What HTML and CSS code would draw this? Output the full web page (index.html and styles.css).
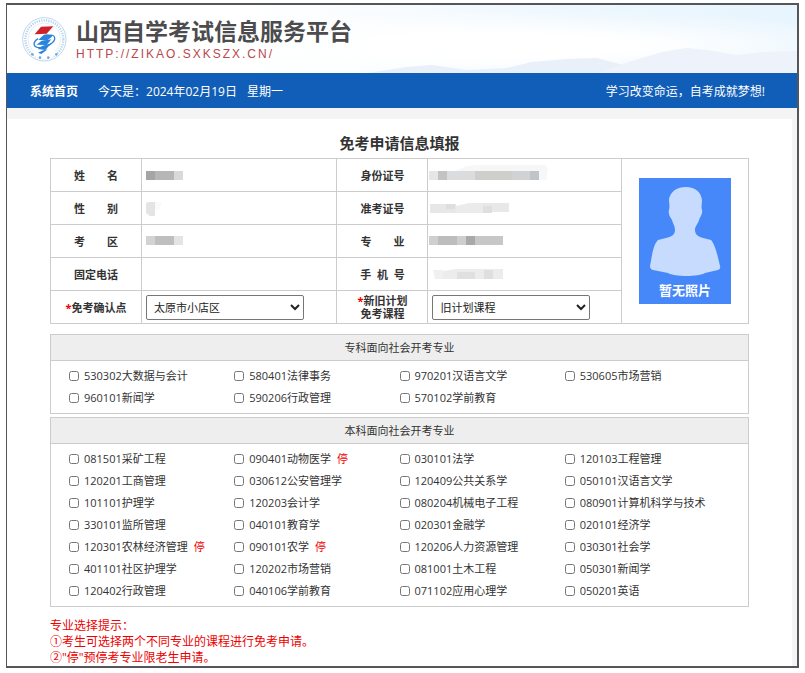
FILE: index.html
```html
<!DOCTYPE html>
<html lang="zh-CN">

<head>
    <meta charset="UTF-8">
    <meta name="viewport" content="width=device-width, initial-scale=1.0">
    <title>免考申请信息填报</title>
    <link rel="stylesheet" href="styles.css">
</head>

<body>
    <div class="page">
        <header class="header">
            <svg class="sky" viewBox="0 0 790 68" preserveAspectRatio="none" aria-hidden="true">
                <path d="M360 68 L400 62 L425 60 L460 65 L500 63 L525 57 L560 54 L590 53 L620 61 L640 68Z" fill="#e9f0fa" />
                <path d="M590 68 L625 56 L655 47 L680 43 L700 45 L730 50 L755 47 L790 46 L790 68Z" fill="#edf2fb" />
            </svg>
            <svg class="logo" viewBox="0 0 135 135" aria-hidden="true">
                <circle cx="67" cy="67" r="65" fill="#fff" stroke="#b9d7ef" stroke-width="3" />
                <circle cx="67" cy="67" r="57" fill="none" stroke="#b3d1ec" stroke-width="7" stroke-dasharray="3 3" pathLength="300" />
                <circle cx="67" cy="67" r="49" fill="#fff" stroke="#d5e7f6" stroke-width="2" />
                <path d="M28 108 L43 98 L91 98 L106 108 L84 127 L50 127Z" fill="#fff" />
                <path d="M57 29 L94 28 L74 50 L38 52Z" fill="#cf2129" />
                <path d="M49 68 L66 53 Q86 49 90 59 L74 71Z" fill="#2b83dc" />
                <path d="M44 83 L58 72 L88 67 L74 84Z" fill="#2b83dc" />
                <path d="M47 96 L62 86 L88 79 L70 99Z" fill="#2b83dc" />
                <path d="M48 107 L64 100 L77 97 L58 111Z" fill="#2b83dc" />
                <path d="M48 65 C32 76 32 90 50 92 C72 94 101 76 98 62 C97 55 90 54 84 55" fill="none" stroke="#2b83dc" stroke-width="4" />
                <g fill="#74a9dd">
                    <circle cx="31" cy="112" r="4" />
                    <circle cx="54" cy="122" r="4" />
                    <circle cx="79" cy="122" r="4" />
                    <circle cx="103" cy="112" r="4" />
                </g>
            </svg>
            <div class="brand">
                <div class="brand-name">山西自学考试信息服务平台</div>
                <div class="brand-url">HTTP://ZIKAO.SXKSZX.CN/</div>
            </div>
        </header>

        <nav class="nav">
            <a class="home" href="#">系统首页</a>
            <span class="date">今天是：2024年02月19日</span>
            <span class="week">星期一</span>
            <span class="slogan">学习改变命运，自考成就梦想!</span>
        </nav>

        <form class="content" action="#" method="post">
            <h1>免考申请信息填报</h1>

            <table class="info">
                <colgroup>
                    <col class="col-label">
                    <col class="col-value">
                    <col class="col-label">
                    <col>
                    <col class="col-photo">
                </colgroup>
                <tr>
                    <th>姓　　名</th>
                    <td>
                        <svg class="mask" width="120" height="20">
                            <path d="M0 6h9v9h-9z" fill="#a6a5a4" />
                            <path d="M9 6h19v9h-19z" fill="#b6b6b6" />
                            <path d="M28 6h9v9h-9z" fill="#d9d9d9" />
                        </svg>
                    </td>
                    <th>身份证号</th>
                    <td>
                        <svg class="mask mask-wide" width="120" height="20">
                            <path d="M26 6 L38 1 L70 -2 L116 -2 L119 5 L117 15 L109 15 L109 6Z" fill="#f7f7f7" />
                            <path d="M0 6h9v9h-9z" fill="#e6e6e6" />
                            <path d="M9 6h9v9h-9z" fill="#c3c3c3" />
                            <path d="M18 6h28v9h-28z" fill="#dbdcdd" />
                            <path d="M46 6h37v9h-37z" fill="#cecfca" />
                            <path d="M83 6h18v9h-18z" fill="#d0d2d4" />
                            <path d="M101 6h9v9h-9z" fill="#bfc4c9" />
                        </svg>
                    </td>
                    <td class="photo-cell" rowspan="5">
                        <figure class="photo">
                            <svg viewBox="0 0 92 100" aria-hidden="true">
                                <path d="M47 9 C56 9 62 14 63 22 C63 26 62 29 63 32 C64 36 61 39 60 42 C59 46 56 48 56 52 C56 57 60 59 64 60 L72 62 C76 66 79 79 81 88 Q82 91 79 92 L66 95 C60 99 35 99 29 95 L14 92 Q11 91 11 88 C13 78 14 67 19 62 L27 60 C32 59 36 57 36 52 C36 48 34 46 33 42 C31 39 29 36 30 32 C31 28 30 25 30 21 C32 13 38 9 47 9Z" fill="#c7dbff" />
                            </svg>
                            <figcaption>暂无照片</figcaption>
                        </figure>
                    </td>
                </tr>
                <tr>
                    <th>性　　别</th>
                    <td>
                        <svg class="mask" width="120" height="20">
                            <path d="M0 5L3 4h6v14h-5L0 15z" fill="#e4e4e4" />
                            <path d="M9 4h7l-3 8h-4z" fill="#fafafa" />
                        </svg>
                    </td>
                    <th>准考证号</th>
                    <td>
                        <svg class="mask mask-wide" width="120" height="20">
                            <path d="M1 6h26v9h-26z" fill="#e7e7e7" />
                            <path d="M17 6h9v5h-9z" fill="#dedede" />
                            <path d="M27 8L40 5h14v10h-27z" fill="#ebebeb" />
                            <path d="M54 5h26v9h-26z" fill="#e8e8e8" />
                            <path d="M54 8h9v7h-9z" fill="#dfdfdf" />
                        </svg>
                    </td>
                </tr>
                <tr>
                    <th>考　　区</th>
                    <td>
                        <svg class="mask" width="120" height="20">
                            <path d="M0 5h9v9h-9z" fill="#d3d3d3" />
                            <path d="M9 5h19v9h-19z" fill="#bfbfbf" />
                            <path d="M28 5h9v9h-9z" fill="#e3e5e5" />
                        </svg>
                    </td>
                    <th>专　　业</th>
                    <td>
                        <svg class="mask mask-wide" width="120" height="20">
                            <path d="M0 5h9v9h-9z" fill="#cfcfcf" />
                            <path d="M9 5h19v9h-19z" fill="#bdbdbd" />
                            <path d="M28 5h9v9h-9z" fill="#cecece" />
                            <path d="M37 5h9v9h-9z" fill="#a9a8aa" />
                            <path d="M46 5h28v9h-28z" fill="#c7c7c7" />
                        </svg>
                    </td>
                </tr>
                <tr>
                    <th>固定电话</th>
                    <td></td>
                    <th>手 &nbsp;机 &nbsp;号</th>
                    <td>
                        <svg class="mask mask-wide" width="120" height="20">
                            <path d="M4 6h10v9h-8z" fill="#f0f0f0" />
                            <path d="M14 7L28 5h46v10h-60z" fill="#ececec" />
                            <path d="M28 8h18v7h-18z" fill="#e0e0e0" />
                            <path d="M55 6h9v9h-9z" fill="#dfdfdf" />
                        </svg>
                    </td>
                </tr>
                <tr>
                    <th><label for="place"><span class="star">*</span>免考确认点</label></th>
                    <td>
                        <select id="place" name="place">
                            <option>太原市小店区</option>
                        </select>
                    </td>
                    <th><label for="plan"><span class="star">*</span>新旧计划<br>免考课程</label></th>
                    <td>
                        <select id="plan" name="plan">
                            <option>旧计划课程</option>
                            <option>新计划课程</option>
                        </select>
                    </td>
                </tr>
            </table>

            <section class="major">
                <h2>专科面向社会开考专业</h2>
                <div class="major-list">
                    <label><input type="checkbox" name="major" value="530302">530302大数据与会计</label>
                    <label><input type="checkbox" name="major" value="580401">580401法律事务</label>
                    <label><input type="checkbox" name="major" value="970201">970201汉语言文学</label>
                    <label><input type="checkbox" name="major" value="530605">530605市场营销</label>
                    <label><input type="checkbox" name="major" value="960101">960101新闻学</label>
                    <label><input type="checkbox" name="major" value="590206">590206行政管理</label>
                    <label><input type="checkbox" name="major" value="570102">570102学前教育</label>
                </div>
            </section>

            <section class="major">
                <h2>本科面向社会开考专业</h2>
                <div class="major-list">
                    <label><input type="checkbox" name="major" value="081501">081501采矿工程</label>
                    <label><input type="checkbox" name="major" value="090401">090401动物医学<span class="stop">停</span></label>
                    <label><input type="checkbox" name="major" value="030101">030101法学</label>
                    <label><input type="checkbox" name="major" value="120103">120103工程管理</label>
                    <label><input type="checkbox" name="major" value="120201">120201工商管理</label>
                    <label><input type="checkbox" name="major" value="030612">030612公安管理学</label>
                    <label><input type="checkbox" name="major" value="120409">120409公共关系学</label>
                    <label><input type="checkbox" name="major" value="050101">050101汉语言文学</label>
                    <label><input type="checkbox" name="major" value="101101">101101护理学</label>
                    <label><input type="checkbox" name="major" value="120203">120203会计学</label>
                    <label><input type="checkbox" name="major" value="080204">080204机械电子工程</label>
                    <label><input type="checkbox" name="major" value="080901">080901计算机科学与技术</label>
                    <label><input type="checkbox" name="major" value="330101">330101监所管理</label>
                    <label><input type="checkbox" name="major" value="040101">040101教育学</label>
                    <label><input type="checkbox" name="major" value="020301">020301金融学</label>
                    <label><input type="checkbox" name="major" value="020101">020101经济学</label>
                    <label><input type="checkbox" name="major" value="120301">120301农林经济管理<span class="stop">停</span></label>
                    <label><input type="checkbox" name="major" value="090101">090101农学<span class="stop">停</span></label>
                    <label><input type="checkbox" name="major" value="120206">120206人力资源管理</label>
                    <label><input type="checkbox" name="major" value="030301">030301社会学</label>
                    <label><input type="checkbox" name="major" value="401101">401101社区护理学</label>
                    <label><input type="checkbox" name="major" value="120202">120202市场营销</label>
                    <label><input type="checkbox" name="major" value="081001">081001土木工程</label>
                    <label><input type="checkbox" name="major" value="050301">050301新闻学</label>
                    <label><input type="checkbox" name="major" value="120402">120402行政管理</label>
                    <label><input type="checkbox" name="major" value="040106">040106学前教育</label>
                    <label><input type="checkbox" name="major" value="071102">071102应用心理学</label>
                    <label><input type="checkbox" name="major" value="050201">050201英语</label>
                </div>
            </section>

            <div class="tips">
                专业选择提示：<br>
                ①考生可选择两个不同专业的课程进行免考申请。<br>
                ②"停"预停考专业限老生申请。
            </div>
        </form>
    </div>
</body>

</html>
```

FILE: styles.css
```css
* {
    box-sizing: border-box;
}

body {
    margin: 3px 6px 5px;
    background: #fff;
    color: #333;
    font-family: "Open Sans", "Noto Sans CJK SC", sans-serif;
    font-size: 11px;
}

.page {
    border: 2px solid #55565a;
    border-left-width: 1px;
    background: #f4f4f4;
}

/* Header */
.header {
    position: relative;
    display: flex;
    align-items: center;
    gap: 9px;
    height: 68px;
    padding-left: 15px;
    background: radial-gradient(ellipse at 62% 60%, #fff 20%, rgba(255, 255, 255, 0) 60%), linear-gradient(90deg, #fff 30%, #edf7fe 75%, #e8f5fe 100%);
}

.sky {
    position: absolute;
    left: 0;
    top: 0;
    width: 100%;
    height: 100%;
}

.logo {
    position: relative;
    width: 45px;
    height: 45px;
}

.brand {
    position: relative;
    margin-bottom: 3px;
}

.brand-name {
    color: #4c4c4e;
    font-size: 23px;
    font-weight: bold;
    line-height: 32px;
}

.brand-url {
    color: #b8494c;
    font-family: "Liberation Sans", Arial, sans-serif;
    font-size: 12px;
    letter-spacing: 2px;
    line-height: 14px;
}

/* Blue bar */
.nav {
    display: flex;
    align-items: center;
    height: 35px;
    padding: 0 32px 0 23px;
    background: #115eb8;
    color: #fff;
    font-size: 12px;
}

.nav .home {
    margin-right: 20px;
    color: #fff;
    font-weight: bold;
    text-decoration: none;
}

.nav .week {
    margin-left: 10px;
}

.nav .slogan {
    margin-left: auto;
}

/* Form */
.content {
    margin: 11px 5px 0 0;
    padding: 9px 43px 0;
    background: #fff;
}

h1 {
    margin: 0;
    font-size: 15px;
    line-height: 30px;
    text-align: center;
}

.info {
    width: 100%;
    border-collapse: collapse;
    table-layout: fixed;
}

.col-label {
    width: 91px;
}

.col-value {
    width: 28%;
}

.col-photo {
    width: 127px;
}

.info tr {
    height: 33px;
}

.info th,
.info td {
    padding: 0;
    border: 1px solid #ccc;
}

.info th {
    line-height: 13px;
}

.info td {
    padding-left: 4px;
}

.info .photo-cell {
    padding: 0;
}

.star {
    color: #e00;
}

.mask {
    display: block;
}

.mask-wide {
    margin-left: -3px;
}

select {
    display: block;
    width: 158px;
    height: 25px;
    padding-left: 3px;
    border: 1px solid #767676;
    border-radius: 2px;
    background-color: #fff;
    color: #222;
    font-family: inherit;
    font-size: 11px;
}

.photo {
    width: 92px;
    height: 126px;
    margin: 0 auto;
    background: #4688fa;
}

.photo svg {
    display: block;
    width: 100%;
}

.photo figcaption {
    color: #fff;
    font-size: 13px;
    font-weight: bold;
    line-height: 24px;
    text-align: center;
}

/* Majors */
.major {
    margin-top: 10px;
    border: 1px solid #ccc;
}

.major + .major {
    margin-top: 3px;
}

.major h2 {
    margin: 0;
    border-bottom: 1px solid #ccc;
    background: #eee;
    font-size: 11px;
    font-weight: normal;
    line-height: 25px;
    text-align: center;
}

.major-list {
    display: grid;
    grid-template-columns: repeat(4, 1fr);
    padding: 4px 18px;
}

.major-list label {
    display: flex;
    align-items: center;
    line-height: 22px;
}

.major-list input {
    width: 10px;
    height: 10px;
    margin: 0 5px 0 0;
}

.stop {
    margin-left: 6px;
    color: #e00;
}

.tips {
    margin-top: 11px;
    color: #e00;
    font-size: 12px;
    line-height: 16px;
}
```
